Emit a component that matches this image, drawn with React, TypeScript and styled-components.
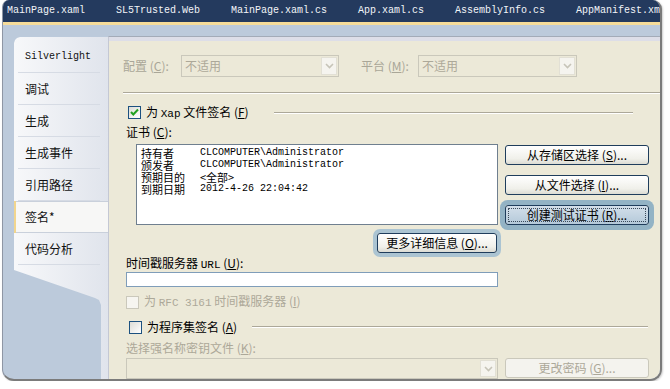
import React from 'react';
import styled, { createGlobalStyle } from 'styled-components';

const CJK = `"Noto Sans CJK SC", "Liberation Sans", sans-serif`;
const MONO = `"Liberation Mono", "Noto Sans CJK SC", monospace`;

const GlobalStyle = createGlobalStyle`
  html, body {
    margin: 0;
    padding: 0;
    background: #ffffff;
  }
  body {
    font-family: ${CJK};
    font-size: 12px;
    line-height: 14px;
  }
`;

const docTabs = [
    'MainPage.xaml',
    'SL5Trusted.Web',
    'MainPage.xaml.cs',
    'App.xaml.cs',
    'AssemblyInfo.cs',
    'AppManifest.xml',
];

const navItems = ['Silverlight', '调试', '生成', '生成事件', '引用路径', '签名*', '代码分析'];

const certRows = [
    { label: '持有者', value: 'CLCOMPUTER\\Administrator', mono: true },
    { label: '颁发者', value: 'CLCOMPUTER\\Administrator', mono: true },
    { label: '预期目的', value: '<全部>', mono: false },
    { label: '到期日期', value: '2012-4-26 22:04:42', mono: true },
];

const Chevron = () => (
    <svg width="9" height="6" viewBox="0 0 9 6">
        <path d="M1 1 L4.5 4.5 L8 1" fill="none" stroke="#c6c4b8" strokeWidth="1.6" />
    </svg>
);

const GreenCheck = () => (
    <svg width="11" height="11" viewBox="0 0 11 11">
        <path d="M2 5 L4.3 7.5 L9 2.5" fill="none" stroke="#21a121" strokeWidth="2" />
    </svg>
);

const ComboBox = ({ width, text, height = 22 }: { width: number; text?: string; height?: number }) => (
    <Select $w={width} $h={height}>
        <SelectText>{text}</SelectText>
        <DropBtn>
            <Chevron />
        </DropBtn>
    </Select>
);

export default function App() {
    return (
        <>
            <GlobalStyle />
            <Window>
                <TabStrip>
                    {docTabs.map((t) => (
                        <DocTab key={t}>{t}</DocTab>
                    ))}
                </TabStrip>
                <Body>
                    <Sidebar>
                        {navItems.map((n) => (
                            <NavItem key={n} $active={n === '签名*'} $latin={n === 'Silverlight'}>
                                {n}
                            </NavItem>
                        ))}
                    </Sidebar>
                    <Content>
                        <ConfigRow>
                            <Label $disabled $w={58}>
                                配置 (<u>C</u>):
                            </Label>
                            <ComboBox width={158} text="不适用" />
                            <Label $disabled $w={57} style={{ marginLeft: 22 }}>
                                平台 (<u>M</u>):
                            </Label>
                            <ComboBox width={159} text="不适用" />
                        </ConfigRow>
                        <Separator />
                        <GroupRow $mt={12} $indent={2}>
                            <CheckBox $checked>
                                <GreenCheck />
                            </CheckBox>
                            <CheckText>
                                为 <Latin>Xap</Latin> 文件签名 (<u>F</u>)
                            </CheckText>
                            <GroupLine $ml={25} $mr={16} />
                        </GroupRow>
                        <FieldLabel $mt={5}>
                            证书 (<u>C</u>):
                        </FieldLabel>
                        <CertRow>
                            <CertBox>
                                {certRows.map((r) => (
                                    <React.Fragment key={r.label}>
                                        <CertKey>{r.label}</CertKey>
                                        <CertValue $mono={r.mono}>{r.value}</CertValue>
                                    </React.Fragment>
                                ))}
                            </CertBox>
                            <ButtonColumn>
                                <Button>从存储区选择 (<u>S</u>)...</Button>
                                <Button>从文件选择 (<u>I</u>)...</Button>
                                <Button $focused>创建测试证书 (<u>R</u>)...</Button>
                            </ButtonColumn>
                        </CertRow>
                        <MoreRow>
                            <Button $hover style={{ width: 120 }}>
                                更多详细信息 (<u>O</u>)...
                            </Button>
                        </MoreRow>
                        <FieldLabel $mt={3}>
                            时间戳服务器 <Latin>URL</Latin> (<u>U</u>):
                        </FieldLabel>
                        <TextInput />
                        <GroupRow $mt={8} $indent={0}>
                            <CheckBox $disabled />
                            <CheckText $disabled>
                                为 <Latin>RFC 3161</Latin> 时间戳服务器 (<u>I</u>)
                            </CheckText>
                        </GroupRow>
                        <GroupRow $mt={11} $indent={3}>
                            <CheckBox />
                            <CheckText>
                                为程序集签名 (<u>A</u>)
                            </CheckText>
                            <GroupLine $ml={15} $mr={1} />
                        </GroupRow>
                        <FieldLabel $mt={7} $disabled>
                            选择强名称密钥文件 (<u>K</u>):
                        </FieldLabel>
                        <KeyRow>
                            <ComboBox width={372} height={21} />
                            <Button $disabled>更改密码 (<u>G</u>)...</Button>
                        </KeyRow>
                    </Content>
                </Body>
            </Window>
        </>
    );
}

// Окно целиком
const Window = styled.div`
    margin-left: 2px;
    width: 660px;
    height: 381px;
    box-sizing: border-box;
    border-left: 1px solid #8e96a4;
    border-right: 2px solid #7b7b7b;
    border-bottom: 2px solid #7b7b7b;
    border-radius: 7px 9px 12px 12px;
    overflow: hidden;
    display: flex;
    flex-direction: column;
    background: #bccadb;
    box-shadow: 1px 1px 2px rgba(0, 0, 0, 0.2);
`;

const TabStrip = styled.div`
    flex: none;
    height: 22px;
    border-bottom: 3px solid #f6dc9a;
    background: #243a5e;
    display: flex;
    align-items: center;
    gap: 31px;
    padding-left: 4px;
    white-space: nowrap;
    overflow: hidden;
`;

const DocTab = styled.span`
    font-family: ${MONO};
    font-size: 10px;
    color: #f2f4f8;
`;

const Body = styled.div`
    flex: 1;
    min-height: 0;
    display: flex;
    padding-top: 11px;
`;

const Sidebar = styled.nav`
    flex: none;
    width: 94px;
    margin-left: 11px;
    margin-top: 1px;
    padding-top: 4px;
    box-sizing: border-box;
    background: linear-gradient(to right, #f7f8fa, #e0e4ec);
    clip-path: polygon(0 6px, 1px 3px, 3px 1px, 6px 0, 100% 0, 100% 100%, 87px 100%, 87px 268px, 85px 263px, 81px 261px, 0 233px);
`;

const NavItem = styled.div<{ $active?: boolean; $latin?: boolean }>`
    position: relative;
    height: 32px;
    box-sizing: border-box;
    display: flex;
    align-items: center;
    padding-left: 11px;
    font-family: ${(p) => (p.$latin ? MONO : CJK)};
    font-size: ${(p) => (p.$latin ? '10px' : '12px')};
    color: #111;
    background: ${(p) => (p.$active ? '#f7f7f6' : 'transparent')};
    box-shadow: ${(p) => (p.$active ? 'inset 2px 0 0 #f1d58e, inset 0 -1px 0 #c9d0db, inset 0 1px 0 #c9d0db' : 'none')};

    &::after {
        content: '';
        position: absolute;
        left: 4px;
        right: 8px;
        bottom: 0;
        height: 1px;
        background: ${(p) => (p.$active ? 'transparent' : '#d6dbe4')};
    }
`;

const Content = styled.main`
    flex: 1;
    min-width: 0;
    overflow: hidden;
    background: #ece9d8;
    border-top: 1px solid #a3abb8;
    border-left: 1px solid #c4c8d4;
    box-shadow: inset 0 4px 0 #dddee8;
    padding: 18px 11px 0 17px;
    display: flex;
    flex-direction: column;
`;

const ConfigRow = styled.div`
    display: flex;
    align-items: center;
    margin-left: -3px;
    height: 22px;
`;

const Label = styled.span<{ $disabled?: boolean; $w: number }>`
    width: ${(p) => p.$w}px;
    flex: none;
    color: ${(p) => (p.$disabled ? '#a9a697' : '#000')};
`;

const Select = styled.div<{ $w: number; $h: number }>`
    width: ${(p) => p.$w}px;
    height: ${(p) => p.$h}px;
    flex: none;
    box-sizing: border-box;
    border: 1px solid #cac8bb;
    background: #ece9d8;
    display: flex;
    align-items: center;
`;

const SelectText = styled.span`
    flex: 1;
    padding-left: 3px;
    color: #aca899;
`;

const DropBtn = styled.span`
    width: 16px;
    height: calc(100% - 2px);
    margin-right: 1px;
    box-sizing: border-box;
    border: 1px solid #e2e0d5;
    background: #f5f4ef;
    display: flex;
    align-items: center;
    justify-content: center;
`;

const Separator = styled.div`
    margin: 15px -11px 0 -3px;
    height: 1px;
    background: #aca899;
    border-bottom: 1px solid #ffffff;
`;

const GroupRow = styled.div<{ $mt: number; $indent: number }>`
    display: flex;
    align-items: center;
    margin-top: ${(p) => p.$mt}px;
    margin-left: ${(p) => p.$indent}px;
    height: 14px;
`;

const CheckBox = styled.span<{ $checked?: boolean; $disabled?: boolean }>`
    flex: none;
    width: 13px;
    height: 13px;
    box-sizing: border-box;
    border: 1px solid ${(p) => (p.$disabled ? '#cac8bb' : '#1c5180')};
    background: ${(p) => (p.$disabled ? '#f6f5f0' : 'linear-gradient(135deg, #dcdcd6, #ffffff)')};
    display: flex;
    align-items: center;
    justify-content: center;
`;

const CheckText = styled.span<{ $disabled?: boolean }>`
    margin-left: 5px;
    white-space: nowrap;
    color: ${(p) => (p.$disabled ? '#aca899' : '#000')};
`;

const Latin = styled.span`
    font-family: ${MONO};
    font-size: 11px;
`;

const GroupLine = styled.span<{ $ml: number; $mr: number }>`
    flex: 1;
    height: 1px;
    margin-left: ${(p) => p.$ml}px;
    margin-right: ${(p) => p.$mr}px;
    background: #aca899;
    border-bottom: 1px solid #fff;
`;

const FieldLabel = styled.div<{ $mt: number; $disabled?: boolean }>`
    margin-top: ${(p) => p.$mt}px;
    height: 14px;
    color: ${(p) => (p.$disabled ? '#aca899' : '#000')};
`;

const CertRow = styled.div`
    display: flex;
    gap: 7px;
    margin-top: 5px;
`;

const CertBox = styled.div`
    margin-left: 10px;
    width: 362px;
    height: 81px;
    box-sizing: border-box;
    border: 1px solid #6f7f8f;
    background: #fff;
    padding: 2px 0 0 4px;
    display: grid;
    grid-template-columns: 59px 1fr;
    grid-auto-rows: 12px;
    align-content: start;
    color: #000;
`;

const CertKey = styled.span`
    font-size: 11px;
    line-height: 12px;
    white-space: nowrap;
`;

const CertValue = styled.span<{ $mono?: boolean }>`
    font-family: ${(p) => (p.$mono ? MONO : CJK)};
    font-size: ${(p) => (p.$mono ? '10px' : '11px')};
    line-height: 12px;
    white-space: nowrap;
`;

const ButtonColumn = styled.div`
    width: 144px;
    padding-top: 1px;
    display: flex;
    flex-direction: column;
    gap: 10px;
`;

const Button = styled.button<{ $focused?: boolean; $hover?: boolean; $disabled?: boolean }>`
    width: 144px;
    height: 20px;
    flex: none;
    box-sizing: border-box;
    padding: 0;
    font-family: ${CJK};
    font-size: 12px;
    line-height: 14px;
    border-radius: 3px;
    border: 1px solid ${(p) => (p.$disabled ? '#cac8bb' : '#1f3d5c')};
    color: ${(p) => (p.$disabled ? '#aca899' : '#000')};
    background: ${(p) =>
        p.$disabled
            ? '#f4f3ee'
            : p.$focused
            ? 'linear-gradient(#d3dfea, #b4c9d9)'
            : 'linear-gradient(#ffffff, #f0f0ea 70%, #dcdcd4)'};
    outline: ${(p) => (p.$focused ? '1px dotted #3a4a5a' : 'none')};
    outline-offset: -4px;
    box-shadow: ${(p) =>
        p.$focused ? '0 0 0 5px #93b3c5' : p.$hover ? '0 0 0 4px #abc4d2' : 'none'};
`;

const MoreRow = styled.div`
    display: flex;
    justify-content: flex-end;
    width: 371px;
    margin-top: 8px;
`;

const TextInput = styled.div`
    margin-top: 2px;
    width: 372px;
    height: 20px;
    box-sizing: border-box;
    border: 1px solid #7f9db9;
    background: #fff;
`;

const KeyRow = styled.div`
    display: flex;
    gap: 7px;
    margin-top: 3px;
`;
